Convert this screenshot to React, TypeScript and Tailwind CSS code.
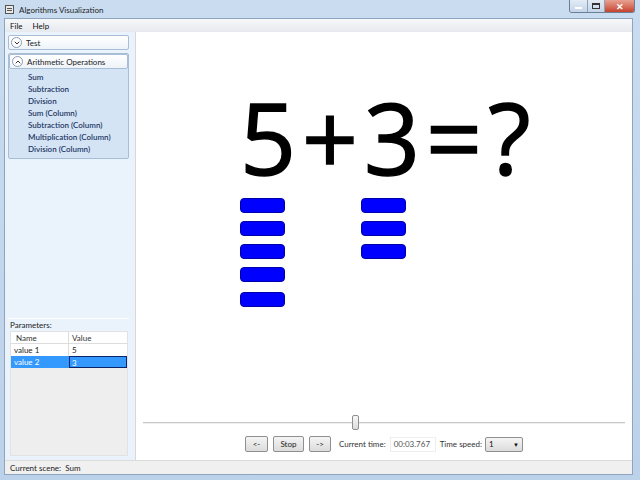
import { ChevronDown, ChevronUp } from 'lucide-react'

const operations = [
  'Sum',
  'Subtraction',
  'Division',
  'Sum (Column)',
  'Subtraction (Column)',
  'Multiplication (Column)',
  'Division (Column)',
]

function Bar() {
  return <div className="w-[45px] h-[15px] rounded-[4px] bg-[#0000ff] border border-[#0000a8]" />
}

function ExpanderHeader({ label, open }: { label: string; open?: boolean }) {
  return (
    <div className="flex items-center h-[15px] px-[2px] gap-[4px] rounded-[2px] border border-[#a8bdd6] bg-gradient-to-b from-white to-[#eef3f9]">
      <div className="w-[11px] h-[11px] rounded-full border border-[#8a9bb0] bg-white flex items-center justify-center">
        {open ? (
          <ChevronUp className="w-[8px] h-[8px] text-[#333]" strokeWidth={3} />
        ) : (
          <ChevronDown className="w-[8px] h-[8px] text-[#333]" strokeWidth={3} />
        )}
      </div>
      <span className="text-[8px] text-[#222]">{label}</span>
    </div>
  )
}

function WinButton({ label, className }: { label: string; className?: string }) {
  return (
    <div
      className={`h-[16px] flex items-center justify-center rounded-[2px] border border-[#8e8f8f] bg-gradient-to-b from-[#f4f4f4] to-[#dcdcdc] text-[8px] text-[#222] ${className ?? ''}`}
    >
      {label}
    </div>
  )
}

export default function App() {
  return (
    <div
      className="w-[640px] h-[480px] flex flex-col bg-gradient-to-b from-[#c9dcf0] to-[#bcd2ea] overflow-hidden"
      style={{ fontFamily: 'Lato, "Noto Sans", sans-serif' }}
    >
      {/* Title bar */}
      <div className="h-[18px] flex items-start relative">
        <div className="mt-[5px] ml-[5px] w-[9px] h-[9px] border border-[#555] bg-[#e8e8e8] flex flex-col justify-center gap-[1px] px-[1px]">
          <div className="h-px bg-[#555]" />
          <div className="h-px bg-[#555]" />
        </div>
        <span className="ml-[5px] mt-[4px] text-[8px] text-[#1e1e1e]">Algorithms Visualization</span>
        <div className="ml-auto mr-[5px] flex h-[13px] rounded-b-[3px] border border-t-0 border-[#6d7f96] overflow-hidden">
          <div className="w-[18px] bg-gradient-to-b from-[#e3ecf6] to-[#c3d4e8] flex items-end justify-center pb-[3px] border-r border-[#8ea0b6]">
            <div className="w-[7px] h-[2px] bg-[#333] border border-white" />
          </div>
          <div className="w-[17px] bg-gradient-to-b from-[#e3ecf6] to-[#c3d4e8] flex items-center justify-center border-r border-[#8ea0b6]">
            <div className="w-[8px] h-[6px] border border-[#333] border-t-2" />
          </div>
          <div className="w-[29px] bg-gradient-to-b from-[#e8a193] to-[#c4412b] flex items-center justify-center text-white text-[9px] font-bold leading-none">
            ✕
          </div>
        </div>
      </div>

      {/* Client area */}
      <div className="flex-1 flex flex-col ml-[4px] mr-[7px] mb-[5px] border border-[#8fa5bf] bg-[#f0f0f0]">
        {/* Menu */}
        <div className="h-[13px] flex items-center gap-[10px] px-[5px] bg-gradient-to-b from-[#f7f8fa] to-[#e6e9ee] text-[8px] text-[#111]">
          <span>File</span>
          <span>Help</span>
        </div>

        <div className="flex-1 flex min-h-0">
          {/* Left panel */}
          <div className="w-[127px] flex flex-col bg-[#eaf3fc] px-[3px] pt-[3px]">
            <ExpanderHeader label="Test" />
            <div className="mt-[3px] rounded-[2px] border border-[#a8bdd6] bg-[#d5e4f4]">
              <ExpanderHeader label="Arithmetic Operations" open />
              <div className="flex flex-col pl-[19px] pt-[2px] pb-[3px]">
                {operations.map((op) => (
                  <span key={op} className="h-[12px] leading-[12px] text-[8px] font-semibold text-[#1d3766]">
                    {op}
                  </span>
                ))}
              </div>
            </div>

            <div className="flex-1" />

            {/* Parameters */}
            <div className="border-t border-white pt-[1px] h-[142px] flex flex-col">
              <span className="text-[8px] text-[#222] pl-[2px] h-[11px] leading-[11px]">Parameters:</span>
              <div className="flex-1 mb-[4px] ml-[2px] mr-[1px] bg-[#eeeeee] border border-[#e2e2e2] flex flex-col text-[8px]">
                <div className="flex h-[12px] bg-white border-b border-[#dddddd]">
                  <span className="w-[58px] pl-[5px] border-r border-[#dddddd] text-[#333]">Name</span>
                  <span className="flex-1 pl-[3px] text-[#333]">Value</span>
                </div>
                <div className="flex h-[12px] bg-white">
                  <span className="w-[58px] pl-[3px] border-r border-[#dddddd] text-[#222]">value 1</span>
                  <span className="flex-1 pl-[3px] text-[#222]">5</span>
                </div>
                <div className="flex h-[12px] bg-[#3399ff] text-white">
                  <span className="w-[58px] pl-[3px]">value 2</span>
                  <span className="flex-1 pl-[2px] border border-[#0a246a]">3</span>
                </div>
              </div>
            </div>
          </div>

          {/* Splitter */}
          <div className="w-[4px] bg-[#eaf3fc] border-r border-[#d8d8d8]" />

          {/* Scene */}
          <div className="flex-1 bg-white flex flex-col">
            <div className="flex-1 flex justify-center">
              <div className="w-[288px] flex flex-col pt-[57px]">
                <div
                  className="text-[98px] leading-[96px] text-black tracking-[6px] whitespace-nowrap [-webkit-text-stroke:1.5px_black]"
                  style={{ fontFamily: '"Open Sans", "Noto Sans", sans-serif' }}
                >
                  5+3=?
                </div>
                <div className="flex gap-[76px] mt-[13px]">
                  <div className="flex flex-col gap-[8px]">
                    <Bar />
                    <Bar />
                    <Bar />
                    <Bar />
                    <div className="mt-[2px]">
                      <Bar />
                    </div>
                  </div>
                  <div className="flex flex-col gap-[8px]">
                    <Bar />
                    <Bar />
                    <Bar />
                  </div>
                </div>
              </div>
            </div>

            {/* Slider */}
            <div className="h-[16px] mx-[7px] mb-[3px] relative flex items-center">
              <div className="flex-1 h-[2px] bg-[#c8c8c8] border-b border-[#eeeeee]" />
              <div className="absolute left-[209px] top-0 w-[7px] h-[15px] rounded-[2px] border border-[#8e8f8f] bg-gradient-to-b from-[#f6f6f6] to-[#dcdcdc]" />
            </div>

            {/* Controls */}
            <div className="h-[26px] flex items-center justify-center pb-[6px] text-[8px] text-[#333]">
              <WinButton label="<-" className="w-[23px]" />
              <WinButton label="Stop" className="w-[31px] ml-[5px]" />
              <WinButton label="->" className="w-[22px] ml-[5px]" />
              <span className="ml-[8px]">Current time:</span>
              <div className="ml-[4px] w-[46px] h-[15px] border border-[#eeeeee] flex items-center pl-[3px] text-[#555]">00:03.767</div>
              <span className="ml-[4px]">Time speed:</span>
              <div className="ml-[3px] w-[38px] h-[15px] rounded-[2px] border border-[#8e8f8f] bg-gradient-to-b from-[#f4f4f4] to-[#dcdcdc] flex items-center justify-between px-[3px]">
                <span className="text-[#111]">1</span>
                <span className="text-[6px] text-[#111]">▼</span>
              </div>
            </div>
          </div>
        </div>

        {/* Status bar */}
        <div className="h-[14px] flex items-center px-[5px] bg-[#f0f0f0] border-t border-[#dcdcdc] text-[8px] text-[#222]">
          Current scene:&nbsp; Sum
        </div>
      </div>
    </div>
  )
}
